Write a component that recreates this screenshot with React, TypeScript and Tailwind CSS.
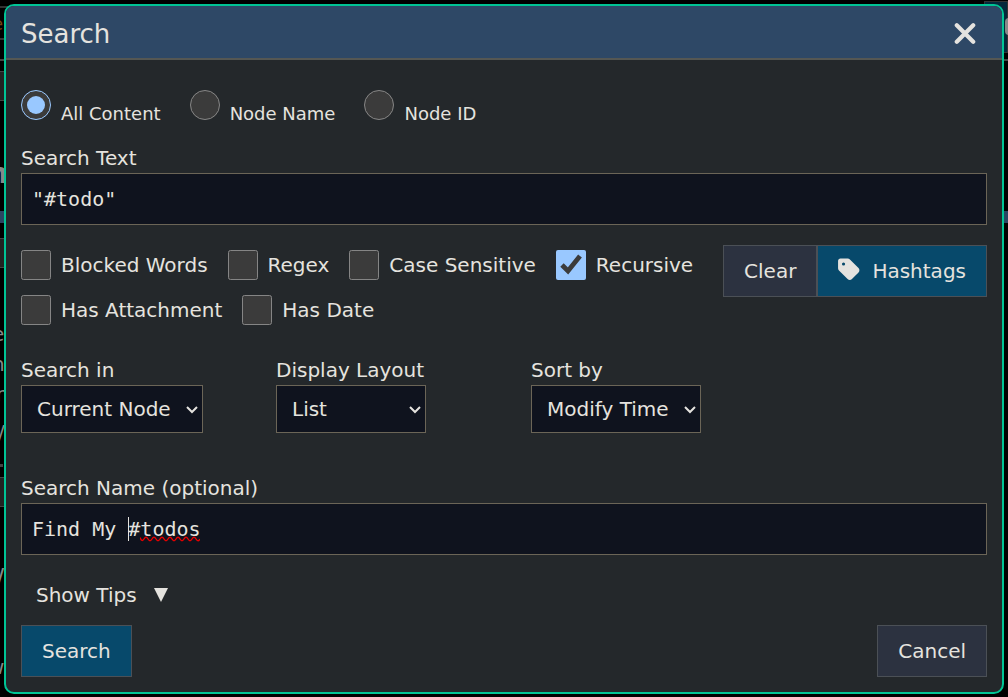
import type { ComponentProps, ReactNode } from "react";
import { FaTag } from "react-icons/fa6";

const fieldBorder = "border border-[#6b6557] bg-[#0f131e]";

function TextField({ id, label, value, spellCheck, children }: { id: string; label: string; value: string; spellCheck?: boolean; children?: ReactNode }) {
  return (
    <div className="flex flex-col">
      <label htmlFor={id} className="h-[30px] leading-[30px]">{label}</label>
      <div className="relative flex">
        <input
          id={id}
          type="text"
          defaultValue={value}
          spellCheck={spellCheck}
          className={`h-[52px] w-full px-2.5 font-['DejaVu_Sans_Mono',monospace] text-xl outline-none ${fieldBorder}`}
        />
        {children}
      </div>
    </div>
  );
}

function Radio({ id, label, checked }: { id: string; label: string; checked?: boolean }) {
  return (
    <div className="flex items-start gap-2.5">
      <input id={id} type="radio" name="target" defaultChecked={checked} className="size-[30px]" />
      <label htmlFor={id} className="pt-3 text-lg leading-6">{label}</label>
    </div>
  );
}

function Check({ id, label, checked }: { id: string; label: string; checked?: boolean }) {
  return (
    <div className="flex items-center gap-2.5">
      <input id={id} type="checkbox" defaultChecked={checked} className="size-[30px]" />
      <label htmlFor={id} className="leading-[30px]">{label}</label>
    </div>
  );
}

function Dropdown({ id, label, options, width }: { id: string; label: string; options: string[]; width: string }) {
  return (
    <div className="flex w-[255px] flex-col">
      <label htmlFor={id} className="h-[30px] leading-[30px]">{label}</label>
      <div className={`relative ${width}`}>
        <select id={id} className={`h-12 w-full appearance-none pl-[15px] ${fieldBorder}`}>
          {options.map((o) => (
            <option key={o}>{o}</option>
          ))}
        </select>
        <svg viewBox="0 0 12 8" className="pointer-events-none absolute right-[5px] top-[21px] h-2 w-3" fill="none" stroke="currentColor" strokeWidth="2">
          <path d="M1 1 6 6 11 1" />
        </svg>
      </div>
    </div>
  );
}

function Button({ primary, className = "", ...rest }: ComponentProps<"button"> & { primary?: boolean }) {
  return (
    <button
      type="button"
      className={`flex h-[52px] items-center border border-[#4b5056] px-5 ${primary ? "bg-[#07496b]" : "bg-[#2c3240]"} ${className}`}
      {...rest}
    />
  );
}

function Backdrop() {
  return (
    <div aria-hidden="true" className="absolute inset-0 overflow-hidden bg-black">
      <div className="absolute left-0 top-[6px] h-0.5 w-3 bg-[#333]" />
      <div className="absolute left-0 top-[38px] h-0.5 w-3 bg-[#333]" />
      <div className="absolute inset-x-0 top-[59px] h-0.5 bg-[#444]" />
      <div className="absolute left-0 top-[71px] h-[30px] w-3 border-y border-[#444] bg-[#222]" />
      <div className="absolute inset-x-0 top-[211px] h-3 bg-[#2b4562]" />
      <div className="absolute left-0 top-[238px] h-[30px] w-3 border-y border-[#444] bg-[#222]" />
      <div className="absolute inset-x-0 top-[464px] h-[3px] w-[3px] bg-[#444]" />
      <div className="absolute left-0 top-[477px] h-[30px] w-3 border-y border-[#444] bg-[#222]" />
      <div className="absolute right-0 top-px h-[52px] w-6 border border-[#333] bg-[#04283b]" />
      <div className="absolute -right-2 top-[18px] h-[17px] w-[11px] rounded-sm bg-[#888]" />
      <div className="absolute -left-2 top-[14px] text-lg leading-5 text-[#7a4510]">e</div>
      <div className="absolute -left-3 top-[160px] text-[28px] font-bold leading-7 text-[#888]">n</div>
      <div className="absolute -left-2 top-[324px] text-xl leading-5 text-[#888]">e</div>
      <div className="absolute -left-2 top-[354px] text-xl leading-5 text-[#888]">n</div>
      <div className="absolute -left-1 top-[384px] text-xl leading-5 text-[#888]">r</div>
      <div className="absolute -left-0.5 top-[422px] text-xl leading-5 text-[#888]">/</div>
      <div className="absolute -left-1 top-[566px] text-2xl leading-6 text-[#888]">/</div>
      <div className="absolute -left-3 top-[657px] text-xl leading-5 text-[#888]">w</div>
    </div>
  );
}

export default function App() {
  return (
    <div className="relative min-h-screen p-1 pb-[3px] font-['DejaVu_Sans',sans-serif] text-xl text-[#e5e3df] [color-scheme:dark]">
      <Backdrop />
      <section role="dialog" aria-labelledby="dialog-title" className="relative overflow-hidden rounded-[10px] border-2 border-[#00c495] bg-[#24282b]">
        <header className="flex h-[54px] items-center justify-between border-b-2 border-[#555753] bg-[#2e4866] pl-[15px] pr-[22px] pt-[3px]">
          <h1 id="dialog-title" className="text-[26px] leading-8">Search</h1>
          <button type="button" aria-label="Close" className="px-1">
            <svg viewBox="0 0 22 22" className="size-[22px]" fill="none" stroke="currentColor" strokeWidth="4.2" strokeLinecap="round">
              <path d="M2.8 2.3 19.2 18.7M19.2 2.3 2.8 18.7" />
            </svg>
          </button>
        </header>

        <form className="flex flex-col px-[15px] pb-[15px] pt-[30px]" onSubmit={(e) => e.preventDefault()}>
          <div className="flex gap-[29px] pb-[17px]">
            <Radio id="all" label="All Content" checked />
            <Radio id="name" label="Node Name" />
            <Radio id="node-id" label="Node ID" />
          </div>

          <TextField id="search-text" label="Search Text" value={'"#todo"'} />

          <div className="flex items-start justify-between pt-5">
            <div className="flex flex-1 flex-wrap gap-x-5 gap-y-[15px] pt-[5px]">
              <Check id="blocked" label="Blocked Words" />
              <Check id="regex" label="Regex" />
              <Check id="case" label="Case Sensitive" />
              <Check id="recursive" label="Recursive" checked />
              <Check id="attachment" label="Has Attachment" />
              <Check id="date" label="Has Date" />
            </div>
            <div className="flex">
              <Button>Clear</Button>
              <Button primary className="gap-3">
                <FaTag className="size-[25px] h-[25px] w-[22px] -translate-y-0.5" />
                Hashtags
              </Button>
            </div>
          </div>

          <div className="flex pt-[30px]">
            <Dropdown id="scope" label="Search in" options={["Current Node"]} width="w-[182px]" />
            <Dropdown id="layout" label="Display Layout" options={["List"]} width="w-[150px]" />
            <Dropdown id="sort" label="Sort by" options={["Modify Time"]} width="w-[170px]" />
          </div>

          <div className="pt-10">
            <TextField id="search-name" label="Search Name (optional)" value="Find My #todos" spellCheck={false}>
              <div className="pointer-events-none absolute left-[107px] top-[14px] h-6 w-px bg-[#e5e3df]" />
              <svg className="pointer-events-none absolute left-[119px] top-[33px] h-[6px] w-[60px]" viewBox="0 0 60 6" fill="none" stroke="#e60000" strokeWidth="1.4">
                <path d="M0 1.5 Q2 6.5 4 3 T8 3 T12 3 T16 3 T20 3 T24 3 T28 3 T32 3 T36 3 T40 3 T44 3 T48 3 T52 3 T56 3 T60 3" />
              </svg>
            </TextField>
          </div>

          <button type="button" className="mt-[25px] flex h-[30px] items-center gap-4 self-start pl-[15px]">
            Show Tips
            <svg viewBox="0 0 16 14" className="h-3.5 w-4" fill="currentColor">
              <path d="M1 0H15L8 14Z" />
            </svg>
          </button>

          <div className="flex justify-between pt-[15px]">
            <Button primary>Search</Button>
            <Button>Cancel</Button>
          </div>
        </form>
      </section>
    </div>
  );
}
